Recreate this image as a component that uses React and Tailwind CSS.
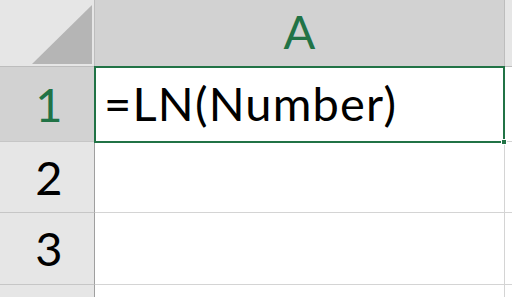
export default function App() {
  const font = { fontFamily: "Lato, 'Open Sans', sans-serif" };
  return (
    <div className="w-[512px] h-[297px] overflow-hidden bg-white relative" style={font}>
      <div className="grid grid-cols-[95px_410px_1fr] grid-rows-[67px_75px_71px_72px_1fr] h-full">
        {/* corner */}
        <div className="bg-[#e6e6e6] border-r border-b border-[#bdbdbd] relative">
          <svg className="absolute left-0 top-0" width="95" height="67">
            <polygon points="32,64 92,64 92,5" fill="#b5b5b5" />
          </svg>
        </div>
        <div className="bg-[#d2d2d2] border-r border-b border-[#bdbdbd] flex items-center justify-center text-[#217346] text-[47px] leading-none pb-[4px]">
          A
        </div>
        <div className="bg-[#e6e6e6] border-b border-[#bdbdbd]" />

        {/* row 1 */}
        <div className="bg-[#d2d2d2] border-r border-b border-[#9f9f9f] border-b-[#c6c6c6] flex items-center justify-center text-[#217346] text-[47px] leading-none pl-[4px]">
          1
        </div>
        <div className="border-r border-b border-[#d4d4d4] flex items-center pl-[9px] text-black text-[47px] tracking-[1.2px] leading-none pb-[2px]">
          =LN(Number)
        </div>
        <div className="border-b border-[#d4d4d4]" />

        {/* row 2 */}
        <div className="bg-[#e6e6e6] border-r border-b border-[#9f9f9f] border-b-[#c6c6c6] flex items-center justify-center text-black text-[47px] leading-none pl-[4px]">
          2
        </div>
        <div className="border-r border-b border-[#d4d4d4]" />
        <div className="border-b border-[#d4d4d4]" />

        {/* row 3 */}
        <div className="bg-[#e6e6e6] border-r border-b border-[#9f9f9f] border-b-[#c6c6c6] flex items-center justify-center text-black text-[47px] leading-none pl-[4px]">
          3
        </div>
        <div className="border-r border-b border-[#d4d4d4]" />
        <div className="border-b border-[#d4d4d4]" />

        {/* row 4 */}
        <div className="bg-[#e6e6e6] border-r border-[#9f9f9f]" />
        <div className="border-r border-[#d4d4d4]" />
        <div />
      </div>
      {/* selection */}
      <div className="absolute left-[94px] top-[66px] w-[411px] h-[77px] border-2 border-[#217346] pointer-events-none" />
      <div className="absolute left-[501px] top-[139px] w-[6px] h-[6px] bg-[#217346] border border-white" />
    </div>
  );
}
